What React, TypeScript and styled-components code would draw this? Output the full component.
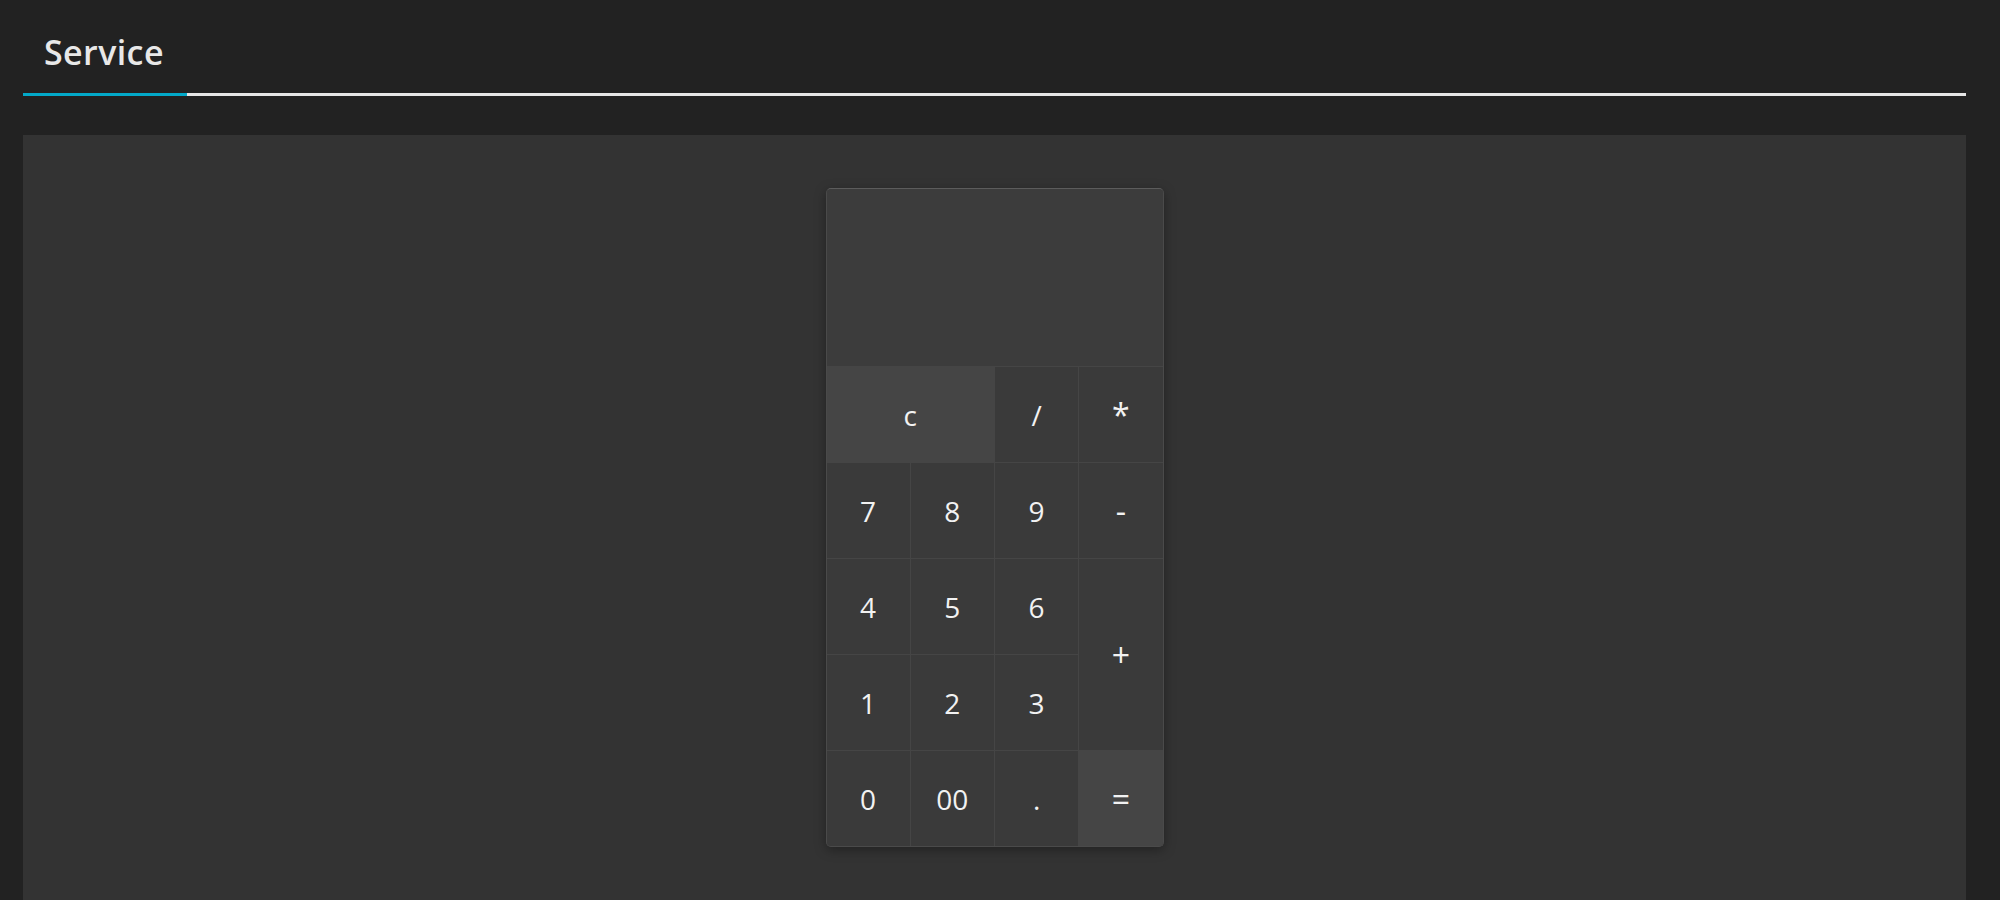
import React from 'react';
import styled, { createGlobalStyle } from 'styled-components';

const GlobalStyle = createGlobalStyle`
  html, body {
    margin: 0;
    padding: 0;
    background: #222222;
    font-family: "Open Sans", "Liberation Sans", sans-serif;
    color: #eeeeee;
  }
`;

const S = {
    Page: styled.div`
    padding: 0 34px 0 23px;
    min-height: 900px;
    display: flex;
    flex-direction: column;
  `,
    TabBar: styled.div`
    display: flex;
    border-bottom: 3px solid #e6e6e6;
    margin-bottom: 39px;
  `,
    Tab: styled.div<{ active?: boolean }>`
    width: 164px;
    box-sizing: border-box;
    padding: 26px 0 14px 21px;
    margin-bottom: -3px;
    font-size: 34px;
    font-weight: 600;
    line-height: 53px;
    letter-spacing: 0.4px;
    color: #e8e8e8;
    border-bottom: 3px solid ${props => (props.active ? '#03a9c9' : 'transparent')};
  `,
    Panel: styled.div`
    flex: 1;
    background: #333333;
    display: flex;
    justify-content: center;
    padding-top: 53px;
  `,
    Calculator: styled.div`
    width: 338px;
    height: 659px;
    box-sizing: border-box;
    border: 1px solid #4a4a4a;
    border-top-color: #5c5c5c;
    border-radius: 5px;
    overflow: hidden;
    background: #444444;
    box-shadow: 0 3px 12px rgba(0, 0, 0, 0.35);
    display: flex;
    flex-direction: column;
  `,
    Display: styled.div`
    height: 177px;
    background: #3c3c3c;
    border-bottom: 1px solid #454545;
  `,
    Keys: styled.div`
    flex: 1;
    display: grid;
    grid-template-columns: repeat(4, 1fr);
    grid-template-rows: repeat(5, 1fr);
    gap: 1px;
    background: #454545;
  `,
    Key: styled.div<{ light?: boolean; wide?: boolean; tall?: boolean; big?: boolean }>`
    display: flex;
    align-items: center;
    justify-content: center;
    background: ${props => (props.light ? '#454545' : '#3a3a3a')};
    grid-column: ${props => (props.wide ? 'span 2' : 'auto')};
    grid-row: ${props => (props.tall ? 'span 2' : 'auto')};
    font-size: ${props => (props.big ? '32px' : '28px')};
    color: #f2f2f2;
    cursor: pointer;
    user-select: none;
  `
};

interface KeyDef {
    label: string;
    light?: boolean;
    wide?: boolean;
    tall?: boolean;
    big?: boolean;
}

const KEYS: KeyDef[] = [
    { label: 'c', light: true, wide: true },
    { label: '/' },
    { label: '*', big: true },
    { label: '7' },
    { label: '8' },
    { label: '9' },
    { label: '-', big: true },
    { label: '4' },
    { label: '5' },
    { label: '6' },
    { label: '+', tall: true, big: true },
    { label: '1' },
    { label: '2' },
    { label: '3' },
    { label: '0' },
    { label: '00' },
    { label: '.' },
    { label: '=', light: true, big: true }
];

const App: React.FC = () => {
    return (
        <>
            <GlobalStyle />
            <S.Page>
                <S.TabBar>
                    <S.Tab active>Service</S.Tab>
                </S.TabBar>
                <S.Panel>
                    <S.Calculator>
                        <S.Display />
                        <S.Keys>
                            {KEYS.map(k => (
                                <S.Key key={k.label} light={k.light} wide={k.wide} tall={k.tall} big={k.big}>
                                    {k.label}
                                </S.Key>
                            ))}
                        </S.Keys>
                    </S.Calculator>
                </S.Panel>
            </S.Page>
        </>
    );
};

export default App;
